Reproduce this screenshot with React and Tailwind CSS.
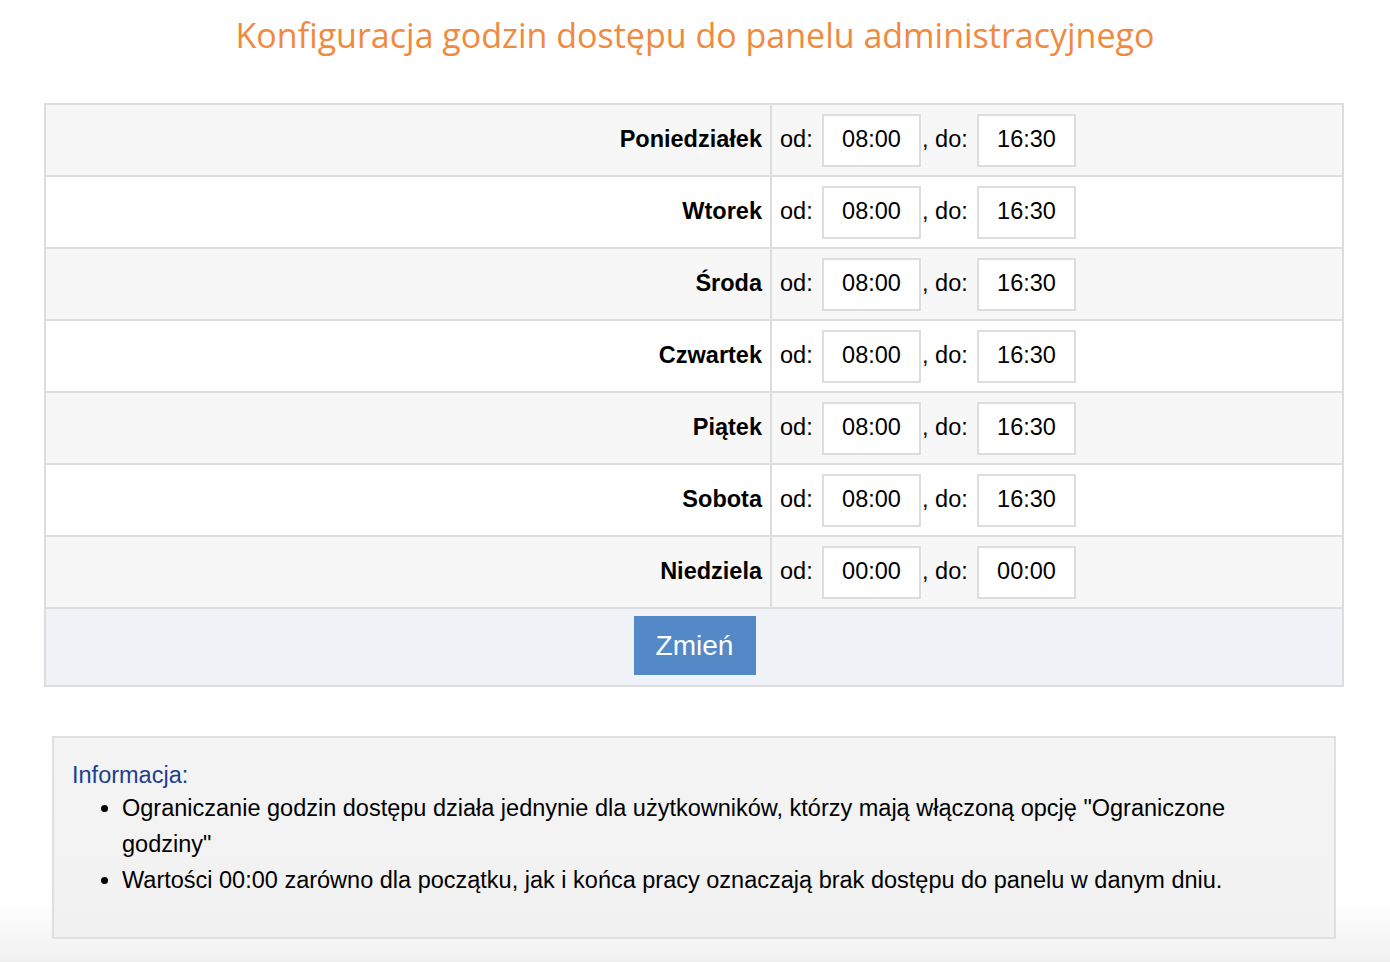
export default function App() {
  const days = [
    ["Poniedziałek", "08:00", "16:30"],
    ["Wtorek", "08:00", "16:30"],
    ["Środa", "08:00", "16:30"],
    ["Czwartek", "08:00", "16:30"],
    ["Piątek", "08:00", "16:30"],
    ["Sobota", "08:00", "16:30"],
    ["Niedziela", "00:00", "00:00"],
  ];
  const f = { fontFamily: '"Liberation Sans", Arial, sans-serif' };
  return (
    <div className="min-h-[962px] bg-[linear-gradient(to_bottom,#ffffff_0px,#ffffff_900px,#f0f0f0_962px)]" style={f}>
      <h1 className="text-center text-[34px] leading-none text-[#ef8a3e] pt-[18px] h-[103px]" style={{ fontFamily: '"Open Sans", sans-serif' }}>
        Konfiguracja godzin dostępu do panelu administracyjnego
      </h1>
      <div className="mx-[44px] w-[1300px] border-2 border-[#dddddd]">
        {days.map(([d, a, b], i) => (
          <div key={d} className={`flex h-[72px] border-b-2 border-[#dddddd] ${i % 2 === 0 ? "bg-[#f7f7f7]" : "bg-white"}`}>
            <div className="w-[726px] flex items-center justify-end pr-[8px] font-bold text-[23.5px] text-black border-r-2 border-[#dddddd]">{d}</div>
            <div className="flex items-center pl-[8px] text-[23.5px] text-black">
              <span className="w-[42px]">od:</span>
              <span className="w-[99px] h-[53px] border-2 border-[#dddddd] bg-white flex items-center justify-center">{a}</span>
              <span className="w-[56px] pl-[1px] whitespace-nowrap">, do:</span>
              <span className="w-[99px] h-[53px] border-2 border-[#dddddd] bg-white flex items-center justify-center">{b}</span>
            </div>
          </div>
        ))}
        <div className="h-[76px] bg-[#eff2f7] flex justify-center pt-[7px]">
          <button className="w-[122px] h-[59px] bg-[#5489c7] text-white text-[28px] ml-[1px]">Zmień</button>
        </div>
      </div>
      <div className="mx-[52px] mt-[49px] w-[1284px] h-[203px] border-2 border-[#e0e0e0] bg-[linear-gradient(to_bottom,#f4f4f4,#f1f1f1)] pt-[22px] pl-[18px] pr-[20px]">
        <div className="text-[23.5px] text-[#1f3f8f] leading-[30px]">Informacja:</div>
        <ul className="list-disc pl-[50px] text-[23.5px] text-black leading-[36px]">
          <li>Ograniczanie godzin dostępu działa jednynie dla użytkowników, którzy mają włączoną opcję "Ograniczone godziny"</li>
          <li>Wartości 00:00 zarówno dla początku, jak i końca pracy oznaczają brak dostępu do panelu w danym dniu.</li>
        </ul>
      </div>
    </div>
  );
}
